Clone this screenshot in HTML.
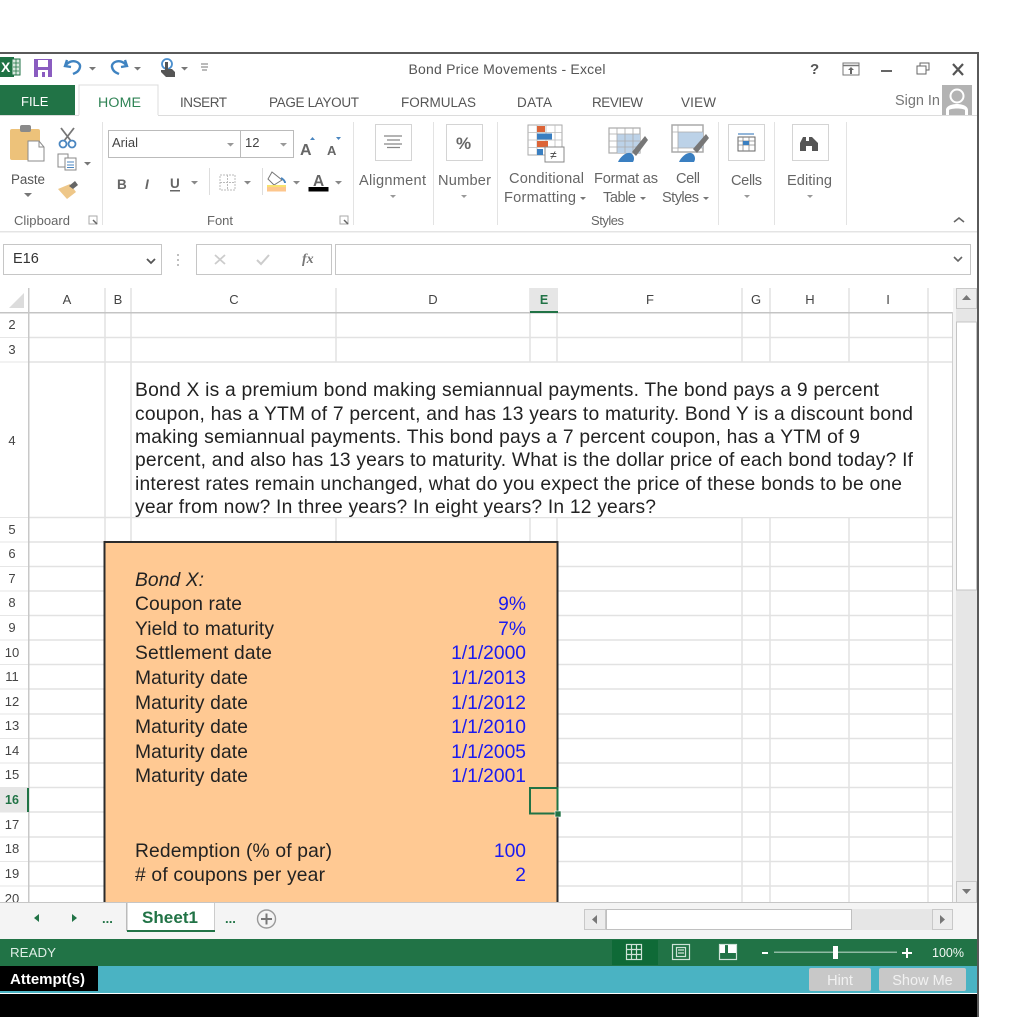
<!DOCTYPE html>
<html><head><meta charset="utf-8"><style>
html,body{margin:0;padding:0;background:#fff;overflow:hidden}
svg{display:block}
text{font-family:"Liberation Sans",sans-serif}
.r{font-size:13.5px;fill:#555}
.t{font-size:14.6px;fill:#666}
.g{font-size:13px;fill:#666}
.h{font-size:13px;fill:#444}
.n{font-size:13px;fill:#444;text-anchor:middle}
.p{font-size:19.25px;fill:#222}
.b{font-size:19.25px;fill:#1a1af0;text-anchor:end}
.gl{stroke:#e2e2e2;stroke-width:1.5}
</style></head><body>
<svg width="1024" height="1017" viewBox="0 0 1024 1017" xmlns="http://www.w3.org/2000/svg">
<rect width="1024" height="1017" fill="#fff"/>
<!-- window -->
<rect x="0" y="52" width="979" height="2" fill="#5a5a5a"/>
<rect x="977" y="52" width="2" height="965" fill="#5a5a5a"/>

<!-- title bar -->
<rect x="0" y="57" width="14" height="20" fill="#1f7244"/>
<rect x="12" y="59" width="8" height="16" fill="#d9e8df" stroke="#1f7244"/>
<path d="M13 63h6M13 67h6M13 71h6M16 59v16" stroke="#1f7244" stroke-width=".8"/>
<text x="1" y="72" style="font-size:14px;font-weight:bold;fill:#fff">X</text>
<rect x="34" y="59" width="18" height="18" fill="#8a5cc0"/>
<rect x="38" y="60" width="10" height="7" fill="#fff"/>
<rect x="38" y="70" width="10" height="7" fill="#fff"/>
<rect x="42" y="72" width="3" height="5" fill="#8a5cc0"/>
<path d="M67 60 L65 66 L71 67 M66 65 C72 58 81 62 80 67 C79 72 75 73 73 74" fill="none" stroke="#3f83c1" stroke-width="2.4"/>
<path d="M89 67h7l-3.500 3.500z" fill="#777"/>
<path d="M125 60 L127 66 L121 67 M126 65 C120 58 111 62 112 67 C113 72 117 73 119 74" fill="none" stroke="#3f83c1" stroke-width="2.400"/>
<path d="M134 67h7l-3.500 3.500z" fill="#777"/>
<circle cx="167" cy="64" r="5" fill="none" stroke="#4b8fce" stroke-width="1.800"/>
<path d="M165 62h3v7h4l3 3v5h-9l-5-5v-2h4z" fill="#555"/>
<path d="M181 67h7l-3.500 3.500z" fill="#777"/>
<path d="M201 64h7M201 67h7M202 70h5" stroke="#777" stroke-width="1"/>
<text x="507" y="74" text-anchor="middle" style="font-size:14px;fill:#555" textLength="197" lengthAdjust="spacing">Bond Price Movements - Excel</text>
<text x="810" y="74" style="font-size:15px;font-weight:bold;fill:#555">?</text>
<rect x="843" y="63" width="16" height="12" fill="none" stroke="#777"/>
<path d="M843 65.500h16" stroke="#777" stroke-width="1.500"/>
<path d="M851 67l-3 3h2v4h2v-4h2z" fill="#666"/>
<rect x="881" y="70" width="11" height="2" fill="#666"/>
<rect x="917" y="66" width="9" height="8" fill="#fff" stroke="#666"/>
<path d="M920 66V63h9v7h-3" fill="none" stroke="#666"/>
<path d="M953 64l10 11M963 64l-10 11" stroke="#555" stroke-width="2.200"/>

<!-- tabs -->
<rect x="0" y="85" width="75" height="30" fill="#217346"/>
<text x="21" y="106" style="font-size:13px;fill:#fff">FILE</text>
<path d="M79 115V85H158V115" fill="#fff" stroke="#dcdcdc"/>
<rect x="0" y="115" width="79" height="1" fill="#dcdcdc"/>
<rect x="158" y="115" width="819" height="1" fill="#dcdcdc"/>
<text x="98" y="107" style="font-size:14.200px;fill:#2f8355" textLength="43">HOME</text>
<text x="180" y="107" class="r" textLength="47">INSERT</text>
<text x="269" y="107" class="r" textLength="90">PAGE LAYOUT</text>
<text x="401" y="107" class="r" textLength="75">FORMULAS</text>
<text x="517" y="107" class="r" textLength="35">DATA</text>
<text x="592" y="107" class="r" textLength="51">REVIEW</text>
<text x="681" y="107" class="r" textLength="35">VIEW</text>
<text x="895" y="105" style="font-size:14.500px;fill:#777" textLength="45">Sign In</text>
<rect x="942" y="85" width="30" height="30" fill="#b3b3b3"/>
<circle cx="957" cy="96" r="7.500" fill="#fff"/>
<circle cx="957" cy="96" r="5.500" fill="#b3b3b3"/>
<path d="M946 115v-5c0-4 6-6 11-6s11 2 11 6v5h-3v-5c-2-2-14-2-16 0v5z" fill="#fff"/>

<!-- ribbon separators -->
<g stroke="#e3e3e3" stroke-width="1">
<path d="M102.500 122V225M353.500 122V225M433.500 122V225M497.500 122V225M718.500 122V225M774.500 122V225M846.500 122V225"/>
<path d="M209.500 168V195M262.500 168V195" stroke="#ddd"/>
</g>
<rect x="0" y="231" width="977" height="1.500" fill="#e4e4e4"/>

<!-- clipboard -->
<rect x="10" y="129" width="30" height="31" rx="2" fill="#edc27a"/>
<rect x="20" y="125" width="11" height="7" rx="2" fill="#8a8a8a"/>
<path d="M28 141h11l5 6v14H28z" fill="#fff" stroke="#8b8b8b"/>
<path d="M39 141v6h5" fill="none" stroke="#8b8b8b"/>
<path d="M61 128l10 13M74 128l-10 13" stroke="#777" stroke-width="1.800"/>
<circle cx="63" cy="144" r="3.500" fill="none" stroke="#4a86c0" stroke-width="1.800"/>
<circle cx="72" cy="144" r="3.500" fill="none" stroke="#4a86c0" stroke-width="1.800"/>
<rect x="58" y="154" width="10" height="13" fill="#fff" stroke="#888"/>
<rect x="65" y="158" width="11" height="12" fill="#fff" stroke="#888"/>
<path d="M67 162h7M67 165h7M67 167.500h7" stroke="#4a86c0"/>
<path d="M84 162h7l-3.500 3.500z" fill="#777"/>
<text x="11" y="184" style="font-size:13.400px;fill:#555" textLength="34">Paste</text>
<path d="M24 193h8l-4 4z" fill="#777"/>
<path d="M58 189l12-5 6 8-9 7z" fill="#eec789"/>
<path d="M69 186l6-5 3 4-5 4z" fill="#666"/>
<text x="14" y="225" class="g" textLength="56">Clipboard</text>
<rect x="89" y="216" width="8" height="8" fill="none" stroke="#aaa"/><path d="M93 220l4 4" stroke="#666" stroke-width="1.500"/>

<!-- font -->
<rect x="108.500" y="130.500" width="132" height="27" fill="#fff" stroke="#bbb"/>
<rect x="240.500" y="130.500" width="53" height="27" fill="#fff" stroke="#bbb"/>
<text x="112" y="147" style="font-size:13px;fill:#444">Arial</text>
<text x="245" y="147" style="font-size:13px;fill:#444">12</text>
<path d="M227 143h7l-3.500 3.500zM280 143h7l-3.500 3.500z" fill="#999"/>
<text x="300" y="155" style="font-size:16px;font-weight:bold;fill:#666">A</text>
<text x="327" y="155" style="font-size:13px;font-weight:bold;fill:#666">A</text>
<path d="M310 140h5l-2.500-3z" fill="#4a86c0"/><path d="M336 137h5l-2.500 3z" fill="#4a86c0"/>
<text x="117" y="189" style="font-size:13.500px;font-weight:bold;fill:#666">B</text>
<text x="145" y="189" style="font-size:13.500px;font-style:italic;font-weight:bold;fill:#666">I</text>
<text x="170" y="188" style="font-size:13.500px;font-weight:bold;fill:#666">U</text>
<rect x="170" y="190" width="10" height="1.500" fill="#666"/>
<path d="M191 181h7l-3.500 3.500z" fill="#888"/>
<rect x="220" y="175" width="15" height="15" fill="none" stroke="#bbb" stroke-dasharray="2 1"/>
<path d="M227.500 175v15M220 182.500h15" stroke="#bbb" stroke-dasharray="2 1"/>
<path d="M244 181h7l-3.500 3.500z" fill="#888"/>
<path d="M272 172l-4 7 6 6 8-5z" fill="#fff" stroke="#777"/>
<path d="M281 178c2 1 4 3 4 5" stroke="#4a86c0" stroke-width="2" fill="none"/>
<rect x="267" y="187" width="19" height="4.500" fill="#fdc68c"/>
<rect x="267" y="185" width="19" height="2" fill="#f7e36f"/>
<path d="M293 181h7l-3.500 3.500z" fill="#888"/>
<text x="313" y="186" style="font-size:15.500px;font-weight:bold;fill:#666">A</text>
<rect x="308.500" y="187" width="20" height="4.500" fill="#000"/>
<path d="M335 181h7l-3.500 3.500z" fill="#888"/>
<text x="207" y="225" class="g" textLength="26">Font</text>
<rect x="340" y="216" width="8" height="8" fill="none" stroke="#aaa"/><path d="M344 220l4 4" stroke="#666" stroke-width="1.500"/>

<!-- alignment/number -->
<rect x="375.500" y="124.500" width="36" height="36" fill="#fff" stroke="#d4d4d4"/>
<path d="M384 136h18M387 140h13M384 144h18M387 147.500h13" stroke="#888" stroke-width="1.200"/>
<text x="359" y="185" class="t" textLength="67">Alignment</text>
<path d="M390 195h6l-3 3z" fill="#999"/>
<rect x="446.500" y="124.500" width="36" height="36" fill="#fff" stroke="#d4d4d4"/>
<text x="456" y="149" style="font-size:17px;font-weight:bold;fill:#666">%</text>
<text x="438" y="185" class="t" textLength="53">Number</text>
<path d="M461 195h6l-3 3z" fill="#999"/>

<!-- conditional formatting -->
<g>
<rect x="528" y="125" width="34" height="30" fill="#fff" stroke="#aaa"/>
<path d="M528 132.500h34M528 140h34M528 147.500h34M537 125v30M546 125v30M555 125v30" stroke="#bbb" stroke-width=".8"/>
<rect x="537" y="126" width="8" height="6" fill="#dc6437"/>
<rect x="537" y="133.500" width="15" height="6" fill="#3a7fc1"/>
<rect x="537" y="141" width="11" height="6" fill="#dc6437"/>
<rect x="537" y="149" width="6" height="6" fill="#3a7fc1"/>
<rect x="545" y="147" width="19" height="15" fill="#fff" stroke="#888"/>
<text x="550" y="159" style="font-size:12px;fill:#444">≠</text>
</g>
<text x="509" y="183" class="t" textLength="75">Conditional</text>
<text x="504" y="202" class="t" textLength="72">Formatting</text>
<path d="M580 197h6l-3 3z" fill="#777"/>
<text x="594" y="183" class="t" textLength="64">Format as</text>
<text x="603" y="202" class="t" textLength="33">Table</text>
<path d="M640 197h6l-3 3z" fill="#777"/>
<!-- format table -->
<rect x="609" y="128" width="31" height="25" fill="#fff" stroke="#aaa" stroke-width="1.200"/>
<rect x="617" y="134" width="23" height="19" fill="#bcd2e8"/>
<path d="M609 134h31M609 141h31M609 147h31M617 128v25M625 128v25M633 128v25" stroke="#aaa" stroke-width=".8"/>
<path d="M632 152l13-16 3 4-12 16z" fill="#777"/>
<path d="M618 162c2-5 8-10 12-9 4 1 5 6 3 9z" fill="#3a7fc1"/>
<!-- cell styles -->
<rect x="672" y="125" width="31" height="27" fill="#fff" stroke="#aaa" stroke-width="1.500"/>
<rect x="678" y="132" width="25" height="16" fill="#bcd2e8"/>
<path d="M672 132h31M672 148h31M678 125v27" stroke="#aaa" stroke-width=".8"/>
<path d="M693 149l13-15 3 4-12 15z" fill="#777"/>
<path d="M679 162c2-5 8-10 12-9 4 1 5 6 3 9z" fill="#3a7fc1"/>
<text x="676" y="183" class="t" textLength="24">Cell</text>
<text x="662" y="202" class="t" textLength="37">Styles</text>
<path d="M703 197h6l-3 3z" fill="#777"/>
<text x="591" y="225" class="g" textLength="33">Styles</text>

<!-- cells / editing -->
<rect x="728.500" y="124.500" width="36" height="36" fill="#fff" stroke="#d4d4d4"/>
<path d="M738 134h16" stroke="#4a86c0" stroke-width="1.200"/>
<rect x="738" y="137" width="17" height="14" fill="#fff" stroke="#666"/>
<path d="M738 141h17M738 145h17M743 137v14M749 137v14" stroke="#888" stroke-width=".8"/>
<rect x="743" y="141" width="6" height="4" fill="#3a7fc1"/>
<text x="731" y="185" class="t" textLength="31">Cells</text>
<path d="M744 195h6l-3 3z" fill="#999"/>
<rect x="792.500" y="124.500" width="36" height="36" fill="#fff" stroke="#d4d4d4"/>
<path d="M800 151v-8l3-6h3v14zM809 151v-14h3l6 6v8h-6v-5h-3z" fill="#555"/>
<rect x="806" y="141" width="4" height="5" fill="#555"/>
<text x="787" y="185" class="t" textLength="45">Editing</text>
<path d="M807 195h6l-3 3z" fill="#999"/>
<path d="M954 222l5-4 5 4" fill="none" stroke="#666" stroke-width="1.600"/>

<!-- formula bar -->
<rect x="3.500" y="244.500" width="158" height="30" fill="#fff" stroke="#c6c6c6"/>
<text x="13" y="263" style="font-size:14.500px;fill:#333">E16</text>
<path d="M147 259l4 4 4-4" fill="none" stroke="#555" stroke-width="1.800"/>
<path d="M178 254v2M178 259v2M178 264v2" stroke="#aaa" stroke-width="1.500"/>
<rect x="196.500" y="244.500" width="135" height="30" fill="#fff" stroke="#c6c6c6"/>
<path d="M215 255l10 9M225 255l-10 9" stroke="#ccc" stroke-width="1.800"/>
<path d="M257 260l4 4 8-9" fill="none" stroke="#ccc" stroke-width="2"/>
<text x="302" y="263" style="font-family:'Liberation Serif',serif;font-size:14px;font-style:italic;font-weight:bold;fill:#777">fx</text>
<rect x="335.500" y="244.500" width="635" height="30" fill="#fff" stroke="#c6c6c6"/>
<path d="M954 257l4 4 4-4" fill="none" stroke="#666" stroke-width="1.600"/>

<!-- grid lines -->
<g class="gl">
<path d="M28 337.500H952M28 362H952M28 517.500H952M28 542H952M28 566.500H952M28 591H952M28 615.500H952M28 640H952M28 664.500H952M28 689H952M28 714H952M28 738.500H952M28 763H952M28 787.500H952M28 812H952M28 837H952M28 861.500H952M28 886H952"/>
<path d="M105 288V542M131 288V542M336 288V362M530 288V362M557 288V362M742 288V362M770 288V362M849 288V362M928 288V903"/>
<path d="M336 517V542M530 517V542M557 517V903M742 517V903M770 517V903M849 517V903"/>
</g>
<path d="M0 337.500H28M0 362H28M0 517.500H28M0 542H28M0 566.500H28M0 591H28M0 615.500H28M0 640H28M0 664.500H28M0 689H28M0 714H28M0 738.500H28M0 763H28M0 787.500H28M0 812H28M0 837H28M0 861.500H28M0 886H28" stroke="#e6e6e6" stroke-width="1"/>
<rect x="0" y="312" width="953" height="1.500" fill="#c4c4c4"/>
<rect x="28" y="288" width="1.500" height="615" fill="#c8c8c8"/>
<rect x="952" y="312" width="1" height="591" fill="#d0d0d0"/>
<path d="M24 293v15H9z" fill="#dcdcdc"/>

<!-- column headers -->
<rect x="530" y="288" width="28" height="24" fill="#e6e6e6"/>
<rect x="530" y="311" width="28" height="2" fill="#217346"/>
<text x="67" y="304" text-anchor="middle" class="h">A</text>
<text x="118" y="304" text-anchor="middle" class="h">B</text>
<text x="234" y="304" text-anchor="middle" class="h">C</text>
<text x="433" y="304" text-anchor="middle" class="h">D</text>
<text x="544" y="304" text-anchor="middle" style="font-size:12.500px;font-weight:bold;fill:#217346">E</text>
<text x="650" y="304" text-anchor="middle" class="h">F</text>
<text x="756" y="304" text-anchor="middle" class="h">G</text>
<text x="810" y="304" text-anchor="middle" class="h">H</text>
<text x="888" y="304" text-anchor="middle" class="h">I</text>

<!-- row headers -->
<text x="12" y="329" class="n">2</text>
<text x="12" y="354" class="n">3</text>
<text x="12" y="445" class="n">4</text>
<text x="12" y="534" class="n">5</text>
<text x="12" y="558" class="n">6</text>
<text x="12" y="583" class="n">7</text>
<text x="12" y="607" class="n">8</text>
<text x="12" y="632" class="n">9</text>
<text x="12" y="657" class="n">10</text>
<text x="12" y="681" class="n">11</text>
<text x="12" y="706" class="n">12</text>
<text x="12" y="730" class="n">13</text>
<text x="12" y="755" class="n">14</text>
<text x="12" y="779" class="n">15</text>
<rect x="0" y="788" width="28" height="24" fill="#e6e6e6"/>
<rect x="27" y="788" width="2" height="24" fill="#217346"/>
<text x="12" y="804" style="font-size:12.500px;font-weight:bold;fill:#217346;text-anchor:middle">16</text>
<text x="12" y="829" class="n">17</text>
<text x="12" y="853" class="n">18</text>
<text x="12" y="878" class="n">19</text>
<text x="12" y="903" class="n">20</text>

<!-- paragraph -->
<rect x="132" y="363" width="795" height="154" fill="#fff"/>
<text x="135" y="396" class="p" textLength="744">Bond X is a premium bond making semiannual payments. The bond pays a 9 percent</text>
<text x="135" y="420" class="p" textLength="778">coupon, has a YTM of 7 percent, and has 13 years to maturity. Bond Y is a discount bond</text>
<text x="135" y="443" class="p" textLength="725">making semiannual payments. This bond pays a 7 percent coupon, has a YTM of 9</text>
<text x="135" y="466" class="p" textLength="778">percent, and also has 13 years to maturity. What is the dollar price of each bond today? If</text>
<text x="135" y="490" class="p" textLength="767">interest rates remain unchanged, what do you expect the price of these bonds to be one</text>
<text x="135" y="513" class="p" textLength="521">year from now? In three years? In eight years? In 12 years?</text>

<!-- orange box -->
<rect x="105" y="542" width="452" height="361" fill="#ffc993"/>
<path d="M104.500 903V542H557.500V903" fill="none" stroke="#2b2b2b" stroke-width="2"/>
<text x="135" y="586" class="p" style="font-style:italic" textLength="69">Bond X:</text>
<text x="135" y="610" class="p" textLength="107">Coupon rate</text>
<text x="135" y="635" class="p" textLength="139">Yield to maturity</text>
<text x="135" y="659" class="p" textLength="137">Settlement date</text>
<text x="135" y="684" class="p" textLength="113">Maturity date</text>
<text x="135" y="709" class="p" textLength="113">Maturity date</text>
<text x="135" y="733" class="p" textLength="113">Maturity date</text>
<text x="135" y="758" class="p" textLength="113">Maturity date</text>
<text x="135" y="782" class="p" textLength="113">Maturity date</text>
<text x="135" y="857" class="p" textLength="197">Redemption (% of par)</text>
<text x="135" y="881" class="p" textLength="190"># of coupons per year</text>
<text x="526" y="610" class="b">9%</text>
<text x="526" y="635" class="b">7%</text>
<text x="526" y="659" class="b">1/1/2000</text>
<text x="526" y="684" class="b">1/1/2013</text>
<text x="526" y="709" class="b">1/1/2012</text>
<text x="526" y="733" class="b">1/1/2010</text>
<text x="526" y="758" class="b">1/1/2005</text>
<text x="526" y="782" class="b">1/1/2001</text>
<text x="526" y="857" class="b">100</text>
<text x="526" y="881" class="b">2</text>
<!-- selection -->
<rect x="530" y="788" width="27.500" height="25.500" fill="none" stroke="#217346" stroke-width="2"/>
<rect x="555" y="811" width="6" height="6" fill="#217346" stroke="#fff" stroke-width=".6"/>

<!-- vertical scrollbar -->
<rect x="953" y="288" width="24" height="615" fill="#f4f4f4"/>
<rect x="956" y="308" width="21" height="573" fill="#e6e6e6"/>
<rect x="956.500" y="288.500" width="20" height="20" fill="#ececec" stroke="#c8c8c8"/>
<path d="M962 300h9l-4.500-5z" fill="#777"/>
<rect x="956.500" y="322" width="20" height="268" fill="#fff" stroke="#c4c4c4"/>
<rect x="956.500" y="881.500" width="20" height="21" fill="#ececec" stroke="#c8c8c8"/>
<path d="M962 889h9l-4.500 5z" fill="#777"/>

<!-- sheet bar -->
<rect x="0" y="903" width="977" height="36" fill="#f4f4f4"/>
<rect x="0" y="902" width="977" height="1" fill="#c6c6c6"/>
<path d="M39 914v8l-5-4zM72 914v8l5-4z" fill="#217346"/>
<text x="102" y="923" style="font-size:13px;font-weight:bold;fill:#217346">...</text>
<rect x="127" y="903" width="87" height="28" fill="#fff"/>
<rect x="126" y="903" width="1.500" height="28" fill="#bbb"/>
<rect x="214" y="903" width="1" height="28" fill="#ccc"/>
<rect x="127" y="930" width="88" height="2" fill="#217346"/>
<text x="142" y="923" style="font-size:17px;font-weight:bold;fill:#217346" textLength="56">Sheet1</text>
<text x="225" y="923" style="font-size:13px;font-weight:bold;fill:#217346">...</text>
<circle cx="266.500" cy="919" r="9" fill="#f4f4f4" stroke="#999" stroke-width="1.400"/>
<path d="M261 919h11M266.500 913.500v11" stroke="#777" stroke-width="2"/>

<!-- h scrollbar -->
<rect x="584" y="909" width="369" height="21" fill="#e6e6e6"/>
<rect x="584.500" y="909.500" width="21" height="20" fill="#ececec" stroke="#c8c8c8"/>
<path d="M597 915v9l-5-4.500z" fill="#777"/>
<rect x="606.500" y="909.500" width="245" height="20" fill="#fff" stroke="#c0c0c0"/>
<rect x="932.500" y="909.500" width="20" height="20" fill="#ececec" stroke="#c8c8c8"/>
<path d="M940 915v9l5-4.500z" fill="#777"/>

<!-- status bar -->
<rect x="0" y="939" width="977" height="27" fill="#217346"/>
<text x="10" y="957" style="font-size:13.300px;fill:#dfeee6" textLength="46">READY</text>
<rect x="612" y="940" width="46" height="25" fill="#0f6a37"/>
<g fill="none" stroke="#cfe3d8" stroke-width="1.200">
<rect x="626.500" y="944.500" width="15" height="15"/>
<path d="M631.500 944.500v15M636.500 944.500v15M626.500 949.500h15M626.500 954.500h15"/>
<rect x="672.500" y="944.500" width="17" height="15"/>
<rect x="676.500" y="947.500" width="9" height="9"/>
<path d="M678 950h6M678 953h6"/>
<rect x="719.500" y="944.500" width="17" height="15"/>
</g>
<rect x="720" y="945" width="5" height="8" fill="#fff"/><rect x="728" y="945" width="8" height="8" fill="#fff"/>
<rect x="762" y="952" width="6" height="2" fill="#fff"/>
<rect x="774" y="951.500" width="123" height="1.500" fill="#8fbaa3"/>
<rect x="833" y="946" width="5" height="13" fill="#fff"/>
<path d="M902 953h10M907 948v10" stroke="#fff" stroke-width="2"/>
<text x="932" y="957" style="font-size:12.500px;fill:#f2f8f4">100%</text>

<!-- teal bar -->
<rect x="0" y="966" width="977" height="27" fill="#4ab3c3"/>
<rect x="0" y="966" width="98" height="25" fill="#000"/>
<text x="10" y="984" style="font-size:15px;font-weight:bold;fill:#fff" textLength="75">Attempt(s)</text>
<rect x="809" y="968" width="62" height="23" rx="2" fill="#c8c8c8"/>
<text x="840" y="985" text-anchor="middle" style="font-size:14.500px;fill:#f1f1f1">Hint</text>
<rect x="879" y="968" width="87" height="23" rx="2" fill="#c8c8c8"/>
<text x="922.500" y="985" text-anchor="middle" style="font-size:14.500px;fill:#f1f1f1">Show Me</text>
<rect x="0" y="993" width="977" height="1" fill="#fff"/>
<rect x="0" y="994" width="977" height="23" fill="#000"/>
</svg>
</body></html>
